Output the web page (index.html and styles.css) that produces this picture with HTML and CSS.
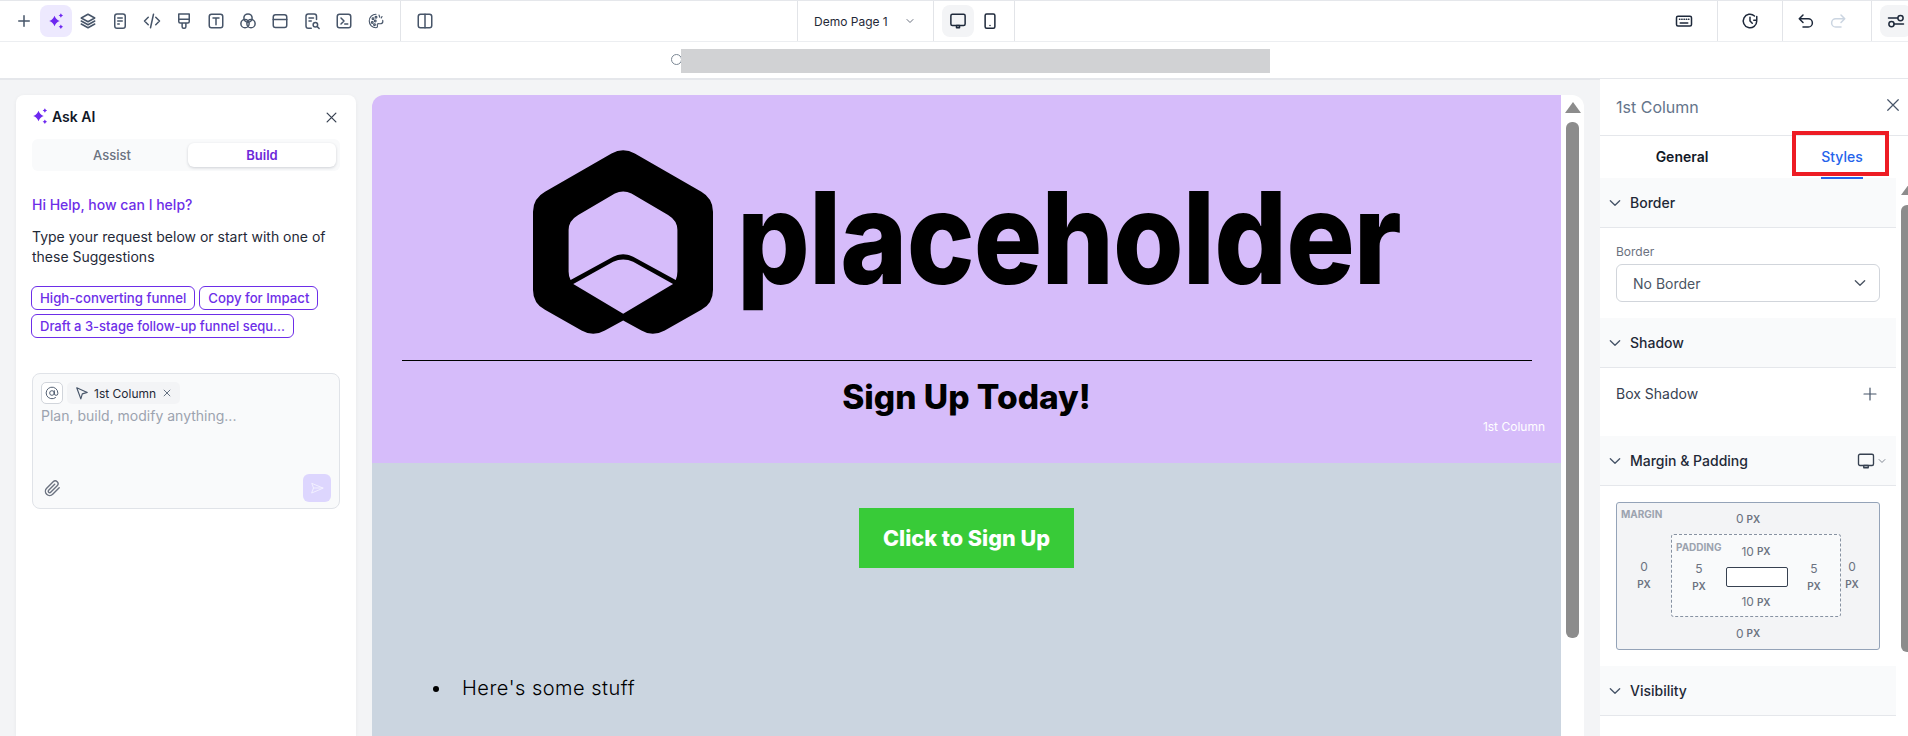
FILE: index.html
```html
<!DOCTYPE html>
<html lang="en">
<head>
<meta charset="utf-8">
<title>Page builder</title>
<link rel="stylesheet" href="styles.css">
</head>
<body>
<header class="toolbar">
  <div class="tool-group tools-left">
    <button class="tool"><svg class="ico" viewBox="0 0 24 24"><path d="M12 5v14M5 12h14"/></svg></button>
    <button class="tool tool-ai"><svg class="ico-fill" viewBox="0 0 24 24"><path d="M10 5Q11.800 10.200 17 12Q11.800 13.800 10 19Q8.200 13.800 3 12Q8.200 10.200 10 5ZM18.500 1.500Q19.300 3.700 21.500 4.500Q19.300 5.300 18.500 7.500Q17.700 5.300 15.500 4.500Q17.700 3.700 18.500 1.500ZM18.500 16.500Q19.300 18.700 21.500 19.500Q19.300 20.300 18.500 22.500Q17.700 20.300 15.500 19.500Q17.700 18.700 18.500 16.500Z"/></svg></button>
    <button class="tool"><svg class="ico" viewBox="0 0 24 24"><path d="M12 3l9 5-9 5-9-5zM3 12l9 5 9-5M3 16l9 5 9-5"/></svg></button>
    <button class="tool"><svg class="ico" viewBox="0 0 24 24"><rect x="5" y="2.500" width="14" height="19" rx="3"/><path d="M9 8h6M9 12h6M9 16h2"/></svg></button>
    <button class="tool"><svg class="ico" viewBox="0 0 24 24"><path d="M7 7l-5 5 5 5M17 7l5 5-5 5M14 3l-4 18"/></svg></button>
    <button class="tool"><svg class="ico" viewBox="0 0 24 24"><path d="M5 2.500h14v10a2 2 0 0 1-2 2H7a2 2 0 0 1-2-2zM5 9.500h14M9.500 14.500v5a2 2 0 0 0 2 2h1a2 2 0 0 0 2-2v-5"/></svg></button>
    <button class="tool"><svg class="ico" viewBox="0 0 24 24"><rect x="3" y="3" width="18" height="18" rx="3"/><path d="M8 8h8M12 8v9"/></svg></button>
    <button class="tool"><svg class="ico" viewBox="0 0 24 24"><circle cx="12" cy="8" r="5.500"/><circle cx="8" cy="15.500" r="5.500"/><circle cx="16" cy="15.500" r="5.500"/></svg></button>
    <button class="tool"><svg class="ico" viewBox="0 0 24 24"><rect x="3" y="3.500" width="18" height="17" rx="3"/><path d="M3 10h18"/></svg></button>
    <button class="tool"><svg class="ico" viewBox="0 0 24 24"><path d="M18 10V5.500a3 3 0 0 0-3-3H7a3 3 0 0 0-3 3v13a3 3 0 0 0 3 3h4M8 8h6M8 12h3"/><circle cx="16.500" cy="17" r="3"/><path d="M19 19.500l2.500 2.500"/></svg></button>
    <button class="tool"><svg class="ico" viewBox="0 0 24 24"><rect x="3" y="3" width="18" height="18" rx="3"/><path d="M8 8l4 4-4 4M13 16h4"/></svg></button>
    <button class="tool"><svg class="ico ico-thin" viewBox="0 0 24 24"><path d="M12 3a9 9 0 1 0 0 18c1.500 0 2-1 2-2s-1-2 0-3 3 0 5-.5 2.500-2 2-4.500"/><circle cx="8" cy="9" r="1.200"/><circle cx="12" cy="7" r="1.200"/><circle cx="7" cy="14" r="1.200"/><circle cx="11" cy="12" r="1.200"/><circle cx="10" cy="17" r="1.200"/><path d="M16 4l1 3M20 6l-1 2"/></svg></button>
  </div>
  <div class="tool-group tools-split">
    <button class="tool"><svg class="ico" viewBox="0 0 24 24"><rect x="3" y="3" width="18" height="18" rx="3"/><path d="M12 3v18"/></svg></button>
  </div>
  <div class="page-picker">
    <span>Demo Page 1</span>
    <svg class="ico-small" viewBox="0 0 24 24"><path d="M6 9l6 6 6-6"/></svg>
  </div>
  <div class="tool-group devices">
    <button class="tool tool-active"><svg class="ico ico-dark" viewBox="0 0 24 24"><rect x="2.500" y="3" width="19" height="15" rx="2"/><path d="M10 18h4v3h-4z"/></svg></button>
    <button class="tool"><svg class="ico ico-dark" viewBox="0 0 24 24"><rect x="5.500" y="2.500" width="13" height="19" rx="2"/><path d="M12 18h.01"/></svg></button>
  </div>
  <div class="keyboard-slot">
    <svg class="ico ico-dark" viewBox="0 0 24 24"><rect x="2" y="5.500" width="20" height="13" rx="2"/><path d="M6 9.500h.5M9 9.500h.5M12 9.500h.5M15 9.500h.5M18 9.500h.5M7 14.500h10"/></svg>
  </div>
  <div class="history-slot">
    <svg class="ico ico-dark" viewBox="0 0 24 24"><path d="M21 12a9 9 0 1 1-3-6.700M12 7v5l3 3M21 6v5h-4"/></svg>
  </div>
  <div class="undo-slot">
    <svg class="ico ico-dark" viewBox="0 0 24 24"><path d="M8 14L3 9l5-5M3 9h12a5.500 5.500 0 0 1 0 11H8"/></svg>
    <svg class="ico ico-muted" viewBox="0 0 24 24"><path d="M16 14l5-5-5-5M21 9H9a5.500 5.500 0 0 0 0 11h7"/></svg>
  </div>
  <button class="tool tool-active tool-settings"><svg class="ico ico-dark" viewBox="0 0 24 24"><path d="M2 8h12M9 16h13"/><circle cx="18" cy="8" r="3.500"/><circle cx="6" cy="16" r="3.500"/></svg></button>
</header>

<div class="addressbar">
  <span class="spinner"></span>
  <span class="redacted"></span>
</div>

<main class="workspace">
  <aside class="ai-panel">
    <div class="ai-head">
      <svg class="ai-spark" viewBox="0 0 24 24"><path d="M10 5Q11.800 10.200 17 12Q11.800 13.800 10 19Q8.200 13.800 3 12Q8.200 10.200 10 5ZM18.500 1.500Q19.300 3.700 21.500 4.500Q19.300 5.300 18.500 7.500Q17.700 5.300 15.500 4.500Q17.700 3.700 18.500 1.500ZM18.500 16.500Q19.300 18.700 21.500 19.500Q19.300 20.300 18.500 22.500Q17.700 20.300 15.500 19.500Q17.700 18.700 18.500 16.500Z"/></svg>
      <span class="ai-title">Ask AI</span>
      <svg class="ico ai-close" viewBox="0 0 24 24"><path d="M5 5l14 14M19 5L5 19"/></svg>
    </div>
    <div class="segment">
      <span class="segment-item">Assist</span>
      <span class="segment-item segment-on">Build</span>
    </div>
    <p class="ai-hello">Hi Help, how can I help?</p>
    <p class="ai-copy">Type your request below or start with one of these Suggestions</p>
    <div class="chips">
      <span class="chip">High-converting funnel</span>
      <span class="chip">Copy for Impact</span>
      <span class="chip chip-long">Draft a 3-stage follow-up funnel sequ...</span>
    </div>
    <div class="prompt">
      <div class="prompt-tags">
        <span class="at-btn"><svg class="ico ico-at" viewBox="0 0 24 24"><circle cx="12" cy="12" r="4"/><path d="M16 8v5a3 3 0 0 0 6 0v-1a10 10 0 1 0-3.920 7.940"/></svg></span>
        <span class="context-tag">
          <svg class="ico ico-cursor" viewBox="0 0 24 24"><path d="M3 3l7 19 2.500-8.500L21 11z"/></svg>
          <span>1st Column</span>
          <svg class="ico ico-tagx" viewBox="0 0 24 24"><path d="M5 5l14 14M19 5L5 19"/></svg>
        </span>
      </div>
      <div class="prompt-text">Plan, build, modify anything...</div>
      <div class="prompt-foot">
        <svg class="ico ico-clip" viewBox="0 0 24 24"><path d="M21.440 11.050l-9.190 9.190a6 6 0 0 1-8.490-8.490l9.190-9.190a4 4 0 0 1 5.660 5.660l-9.200 9.190a2 2 0 0 1-2.830-2.830l8.490-8.480"/></svg>
        <span class="send"><svg class="ico ico-send" viewBox="0 0 24 24"><path d="M22 12L3 4l3 8-3 8zM6 12h16"/></svg></span>
      </div>
    </div>
  </aside>

  <section class="canvas">
    <div class="page">
      <div class="hero">
        <div class="logo">
          <svg class="logo-mark" viewBox="69 60 541 552"><path fill-rule="evenodd" d="M305 70Q340 50 375 70L575 185Q610 205 610 245L610 480Q610 520 575 540L465 602Q428 622 395 602L340 572L285 602Q250 622 215 602L105 540Q69 520 69 480L69 245Q69 205 105 185ZM315 190Q340 178 365 190L475 255Q503 272 503 300L503 425Q503 440 498 450L370 380Q340 365 310 380L182 450Q176 440 176 425L176 300Q176 272 205 255ZM190 462L310 395Q340 382 370 395L490 462L340 552Z"/></svg>
          <div class="logo-word"><span>placeholder</span></div>
        </div>
        <hr class="rule">
        <h1 class="headline">Sign Up Today!</h1>
        <span class="col-label">1st Column</span>
      </div>
      <div class="lower">
        <button class="cta">Click to Sign Up</button>
        <ul class="stuff"><li>Here's some stuff</li></ul>
      </div>
    </div>
    <div class="page-scroll">
      <span class="arrow-up"></span>
      <span class="thumb"></span>
    </div>
  </section>

  <aside class="props">
    <div class="props-head">
      <span class="props-title">1st Column</span>
      <svg class="ico props-close" viewBox="0 0 24 24"><path d="M5 5l14 14M19 5L5 19"/></svg>
    </div>
    <div class="tabs">
      <span class="tab">General</span>
      <span class="tab tab-on">Styles</span>
      <span class="callout"></span>
    </div>
    <div class="props-body">
      <div class="props-list">
        <div class="sec-head"><svg class="ico-small sec-chev" viewBox="0 0 24 24"><path d="M5 8.500l7 7 7-7"/></svg><span>Border</span></div>
        <div class="sec-border">
          <label class="field-label">Border</label>
          <div class="select"><span>No Border</span><svg class="ico-small select-chev" viewBox="0 0 24 24"><path d="M5 8.500l7 7 7-7"/></svg></div>
        </div>
        <div class="sec-head"><svg class="ico-small sec-chev" viewBox="0 0 24 24"><path d="M5 8.500l7 7 7-7"/></svg><span>Shadow</span></div>
        <div class="sec-shadow">
          <span>Box Shadow</span>
          <svg class="ico shadow-plus" viewBox="0 0 24 24"><path d="M12 3v18M3 12h18"/></svg>
        </div>
        <div class="sec-head"><svg class="ico-small sec-chev" viewBox="0 0 24 24"><path d="M5 8.500l7 7 7-7"/></svg><span>Margin &amp; Padding</span>
          <span class="sec-device"><svg class="ico ico-device" viewBox="0 0 24 24"><rect x="2" y="3" width="20" height="15" rx="2"/><path d="M9 18h6v3H9z"/></svg><svg class="ico-small ico-tiny" viewBox="0 0 24 24"><path d="M5 8.500l7 7 7-7"/></svg></span>
        </div>
        <div class="sec-box">
          <div class="margin-box">
            <span class="box-title box-title-margin">MARGIN</span>
            <div class="val val-top">0 <small>PX</small></div>
            <div class="val-stack">0<small>PX</small></div>
            <div class="padding-box">
              <span class="box-title box-title-padding">PADDING</span>
              <div class="val val-top">10 <small>PX</small></div>
              <div class="val-stack">5<small>PX</small></div>
              <div class="content-box"></div>
              <div class="val-stack">5<small>PX</small></div>
              <div class="val val-top">10 <small>PX</small></div>
            </div>
            <div class="val-stack val-right">0<small>PX</small></div>
            <div class="val val-top">0 <small>PX</small></div>
          </div>
        </div>
        <div class="sec-head"><svg class="ico-small sec-chev" viewBox="0 0 24 24"><path d="M5 8.500l7 7 7-7"/></svg><span>Visibility</span></div>
      </div>
      <div class="props-scroll">
        <span class="arrow-clip"></span>
        <span class="props-thumb"></span>
      </div>
    </div>
  </aside>
</main>
</body>
</html>
```
FILE: styles.css
```css
* { box-sizing: border-box; }
html, body { margin: 0; height: 736px; overflow: hidden; }
body {
  font-family: Inter, "Liberation Sans", sans-serif;
  background: #fff;
  color: #1f2937;
  display: flex;
  flex-direction: column;
}
button { font: inherit; border: 0; background: none; padding: 0; }
p, h1 { margin: 0; }

.ico, .ico-small {
  fill: none;
  stroke: #475569;
  stroke-width: 2;
  stroke-linecap: round;
  stroke-linejoin: round;
  flex: none;
}
.ico { width: 18px; height: 18px; }
.ico-small { width: 12px; height: 12px; stroke: #6b7280; }
.ico-dark { stroke: #1e293b; }
.ico-muted { stroke: #cbd5e1; }
.ico-thin { stroke-width: 1.5; }
.ico-fill { width: 18px; height: 18px; fill: #6d28f0; }

.toolbar {
  height: 42px;
  flex: none;
  display: flex;
  align-items: stretch;
  border-top: 1px solid #e5e7eb;
  border-bottom: 1px solid #eceef1;
}
.toolbar > * { flex: none; }
.tool-group { display: flex; align-items: center; }
.tools-left {
  padding-left: 8px;
  width: 401px;
  border-right: 1px solid #e2e4e8;
}
.tool {
  width: 32px;
  height: 32px;
  display: flex;
  align-items: center;
  justify-content: center;
  border-radius: 8px;
  flex: none;
}
.tool-ai { background: #ede9fe; }
.tool-active { background: #f3f4f6; }
.tools-split {
  padding-left: 8px;
  width: 397px;
  border-right: 1px solid #e2e4e8;
}
.page-picker {
  width: 136px;
  display: flex;
  align-items: center;
  padding-left: 16px;
  gap: 16px;
  font-size: 12px;
  color: #1f2937;
  border-right: 1px solid #e2e4e8;
}
.devices {
  width: 81px;
  padding-left: 8px;
  border-right: 1px solid #e2e4e8;
}
.keyboard-slot {
  width: 703px;
  display: flex;
  align-items: center;
  justify-content: flex-end;
  padding-right: 24px;
  border-right: 1px solid #e2e4e8;
}
.history-slot {
  width: 65px;
  display: flex;
  align-items: center;
  justify-content: center;
  border-right: 1px solid #e2e4e8;
}
.undo-slot {
  width: 89px;
  display: flex;
  align-items: center;
  padding-left: 14px;
  gap: 14px;
  border-right: 1px solid #e2e4e8;
}
.tool-settings { margin: 4px 0 0 8px; }

.addressbar {
  height: 38px;
  flex: none;
  display: flex;
  align-items: flex-start;
  padding: 7px 0 0 671px;
  border-bottom: 2px solid #e5e7eb;
}
.spinner {
  width: 11px;
  height: 11px;
  margin-top: 5px;
  border: 1px solid #7b8794;
  border-radius: 50%;
  flex: none;
}
.redacted {
  width: 589px;
  height: 24px;
  margin-left: -1px;
  background: #d1d2d4;
}

.workspace {
  flex: 1;
  min-height: 0;
  display: flex;
  background: #f3f4f6;
}

.ai-panel {
  width: 340px;
  margin: 15px 0 0 16px;
  padding: 0 16px;
  background: #fff;
  border-radius: 8px 8px 0 0;
  box-shadow: 0 1px 4px rgba(15, 23, 42, .05);
  flex: none;
}
.ai-head {
  height: 44px;
  display: flex;
  align-items: center;
}
.ai-spark { width: 18px; height: 18px; fill: #6d28f0; margin: -3px 3px 0 -1px; flex: none; }
.ai-title { font-size: 14px; font-weight: 600; color: #111827; margin-top: -2px; }
.ai-close { width: 15px; height: 15px; stroke: #374151; margin: 1px 1px 0 auto; }
.segment {
  height: 32px;
  display: flex;
  align-items: center;
  padding: 0 4px;
  background: #f9fafb;
  border-radius: 6px;
}
.segment-item {
  flex: 1;
  height: 24px;
  line-height: 24px;
  text-align: center;
  font-size: 13px;
  font-weight: 500;
  color: #6b7280;
  border-radius: 6px;
}
.segment-on {
  flex: none;
  width: 148px;
  font-weight: 600;
  background: #fff;
  color: #6d28d9;
  box-shadow: 0 1px 3px rgba(15, 23, 42, .18);
}
.ai-hello {
  margin-top: 24px;
  font-size: 14px;
  line-height: 20px;
  font-weight: 500;
  color: #6d2ee8;
}
.ai-copy {
  margin-top: 12px;
  font-size: 14px;
  line-height: 20px;
  color: #1f2937;
}
.chips {
  margin: 19px 0 0 -1px;
  display: flex;
  flex-wrap: wrap;
  gap: 4px;
}
.chip {
  height: 24px;
  line-height: 22px;
  padding: 0 8px;
  border: 1px solid #6d2ee8;
  border-radius: 6px;
  font-size: 13.200px;
  font-weight: 500;
  color: #6d2ee8;
  white-space: nowrap;
}
.chip-long { font-size: 13px; }
.prompt {
  margin-top: 35px;
  height: 136px;
  padding: 8px 8px 6px;
  background: #f9fafb;
  border: 1px solid #e0e3e8;
  border-radius: 8px;
  display: flex;
  flex-direction: column;
}
.prompt-tags { display: flex; gap: 4px; }
.at-btn {
  width: 22px;
  height: 22px;
  display: flex;
  align-items: center;
  justify-content: center;
  background: #fff;
  border: 1px solid #d1d5db;
  border-radius: 5px;
}
.ico-at { width: 14px; height: 14px; stroke-width: 1.600; }
.context-tag {
  height: 22px;
  display: flex;
  align-items: center;
  gap: 5px;
  padding: 0 8px;
  background: #f3f4f6;
  border-radius: 5px;
  font-size: 12px;
  color: #1f2937;
}
.ico-cursor { width: 14px; height: 14px; }
.ico-tagx { width: 10px; height: 10px; margin-left: 1px; }
.prompt-text {
  margin-top: 2px;
  font-size: 14px;
  line-height: 20px;
  color: #9ca3af;
}
.prompt-foot {
  margin-top: auto;
  display: flex;
  align-items: center;
  justify-content: space-between;
}
.ico-clip { width: 17px; height: 17px; stroke: #6b7280; margin-left: 3px; }
.send {
  width: 28px;
  height: 28px;
  display: flex;
  align-items: center;
  justify-content: center;
  background: #ddd6fe;
  border-radius: 6px;
}
.ico-send { stroke: #f5f3ff; stroke-width: 1.500; width: 14px; height: 14px; }

.canvas {
  width: 1212px;
  margin: 15px 0 0 16px;
  display: flex;
  flex: none;
  border-radius: 12px 12px 0 0;
  overflow: hidden;
}
.page { flex: 1; min-width: 0; }
.hero {
  position: relative;
  height: 368px;
  padding-top: 55px;
  background: #d6bcfa;
}
.logo {
  height: 184px;
  display: flex;
  justify-content: center;
  gap: 24px;
}
.logo-mark { width: 180px; height: 184px; flex: none; }
.logo-word {
  width: 663px;
  padding-top: 24px;
  font-size: 128px;
  line-height: 1;
  font-weight: 800;
  color: #000;
  white-space: nowrap;
}
.logo-word span {
  display: inline-block;
  transform-origin: 0 50%;
  transform: scaleX(.892);
  letter-spacing: -1px;
}
.rule {
  margin: 26px 29px 0 30px;
  height: 1px;
  border: 0;
  background: #000;
}
.headline {
  margin-top: 16px;
  text-align: center;
  font-size: 33.500px;
  line-height: 40px;
  font-weight: 800;
  color: #000;
}
.col-label {
  position: absolute;
  right: 16px;
  top: 324px;
  font-size: 12px;
  line-height: 16px;
  color: #fff;
}
.lower {
  height: 273px;
  padding-top: 45px;
  background: #cbd5e0;
  display: flex;
  flex-direction: column;
  align-items: center;
}
.cta {
  width: 215px;
  height: 60px;
  background: #38cb38;
  color: #fff;
  font-size: 21.600px;
  font-weight: 800;
}
.stuff {
  align-self: stretch;
  margin: 105px 0 0;
  padding-left: 80px;
  font-size: 20px;
  line-height: 30px;
  font-weight: 300;
  letter-spacing: .5px;
  color: #000;
}
.stuff li { padding-left: 10px; }
.page-scroll {
  width: 23px;
  background: #fff;
  display: flex;
  flex-direction: column;
  align-items: center;
  flex: none;
}
.arrow-up {
  width: 0;
  height: 0;
  margin-top: 7px;
  border-left: 8px solid transparent;
  border-right: 8px solid transparent;
  border-bottom: 11px solid #8c8c8c;
}
.thumb {
  width: 13px;
  height: 516px;
  margin-top: 9px;
  background: #8c8c8c;
  border-radius: 6px;
}

.props {
  width: 308px;
  margin: -1px 0 0 16px;
  background: #fff;
  flex: none;
  display: flex;
  flex-direction: column;
  min-height: 0;
}
.props-head {
  height: 57px;
  flex: none;
  display: flex;
  align-items: center;
  justify-content: space-between;
  padding: 0 6px 0 16px;
  border-bottom: 1px solid #e5e7eb;
}
.props-title { font-size: 16px; color: #64748b; }
.props-close { width: 18px; height: 18px; stroke: #475569; stroke-width: 1.600; margin-top: -5px; }
.tabs {
  position: relative;
  height: 42px;
  flex: none;
  display: flex;
}
.tab {
  width: 164px;
  line-height: 42px;
  text-align: center;
  font-size: 14px;
  font-weight: 600;
  color: #111827;
}
.tab-on {
  width: 84px;
  margin-left: 36px;
  color: #2563eb;
  font-weight: 500;
  position: relative;
}
.tab-on::after {
  content: "";
  position: absolute;
  left: 21px;
  bottom: -1px;
  width: 42px;
  height: 2px;
  background: #2563eb;
}
.callout {
  position: absolute;
  left: 192px;
  top: -5px;
  width: 97px;
  height: 45px;
  border: 4px solid #ed1c24;
}
.props-body { flex: 1; min-height: 0; display: flex; }
.props-list { width: 296px; flex: none; }
.sec-head {
  height: 50px;
  display: flex;
  align-items: center;
  padding-left: 7px;
  background: #f9fafb;
  border-bottom: 1px solid #e5e7eb;
  font-size: 14px;
  font-weight: 500;
  color: #1f2937;
}
.sec-chev { width: 16px; height: 16px; margin-right: 7px; stroke: #475569; }
.sec-device { margin-left: auto; display: flex; align-items: center; gap: 2px; padding-right: 9px; }
.ico-device { width: 18px; height: 18px; stroke-width: 1.800; stroke: #374151; }
.ico-tiny { width: 10px; height: 10px; }
.sec-border { height: 90px; padding: 17px 16px 0; }
.field-label { display: block; font-size: 12px; line-height: 14px; color: #6b7280; }
.select {
  margin-top: 5px;
  width: 264px;
  height: 38px;
  display: flex;
  align-items: center;
  justify-content: space-between;
  padding: 0 11px 0 16px;
  border: 1px solid #d1d5db;
  border-radius: 6px;
  font-size: 14px;
  color: #4b5563;
}
.select-chev { width: 16px; height: 16px; stroke: #4b5563; }
.sec-shadow {
  height: 68px;
  padding: 16px 16px 0;
  display: flex;
  align-items: flex-start;
  justify-content: space-between;
  font-size: 14px;
  line-height: 20px;
  color: #374151;
}
.shadow-plus { width: 16px; height: 16px; margin: 2px 2px 0 0; stroke-width: 1.800; }
.sec-box { height: 180px; padding: 16px; }
.margin-box {
  position: relative;
  width: 264px;
  height: 148px;
  display: grid;
  grid-template-columns: 54px 170px 38px;
  grid-template-rows: 31px 83px 32px;
  background: #f3f4f6;
  border: 1px solid #94a3b8;
  border-radius: 3px;
}
.val {
  display: flex;
  align-items: center;
  justify-content: center;
  gap: 3px;
  font-size: 12px;
  color: #6b7280;
}
.val small, .val-stack small { font-size: 10px; font-weight: 600; color: #6b7280; }
.val-top { grid-column: 1 / -1; }
.val-stack {
  display: flex;
  flex-direction: column;
  align-items: center;
  justify-content: center;
  gap: 3px;
  font-size: 12px;
  line-height: 14px;
  color: #6b7280;
}
.val-right { padding-right: 16px; }
.padding-box {
  position: relative;
  display: grid;
  grid-template-columns: 54px 62px 52px;
  grid-template-rows: 32px 20px 29px;
  background: #f9fafb;
  border: 1px dashed #8792a2;
  border-radius: 3px;
}
.content-box {
  background: #fff;
  border: 1px solid #374151;
  border-radius: 2px;
}
.box-title {
  position: absolute;
  font-size: 10px;
  font-weight: 700;
  line-height: 12px;
  color: #9ca3af;
}
.box-title-margin { left: 4px; top: 5px; }
.box-title-padding { left: 4px; top: 6px; }
.props-scroll {
  width: 7px;
  margin-left: 5px;
  flex: none;
  overflow: hidden;
  display: flex;
  flex-direction: column;
}
.arrow-clip {
  width: 0;
  height: 0;
  margin-top: 6px;
  border-left: 8px solid transparent;
  border-right: 8px solid transparent;
  border-bottom: 11px solid #8c8c8c;
  flex: none;
}
.props-thumb {
  width: 13px;
  height: 447px;
  margin-top: 10px;
  background: #8c8c8c;
  border-radius: 6px;
  flex: none;
}
```
